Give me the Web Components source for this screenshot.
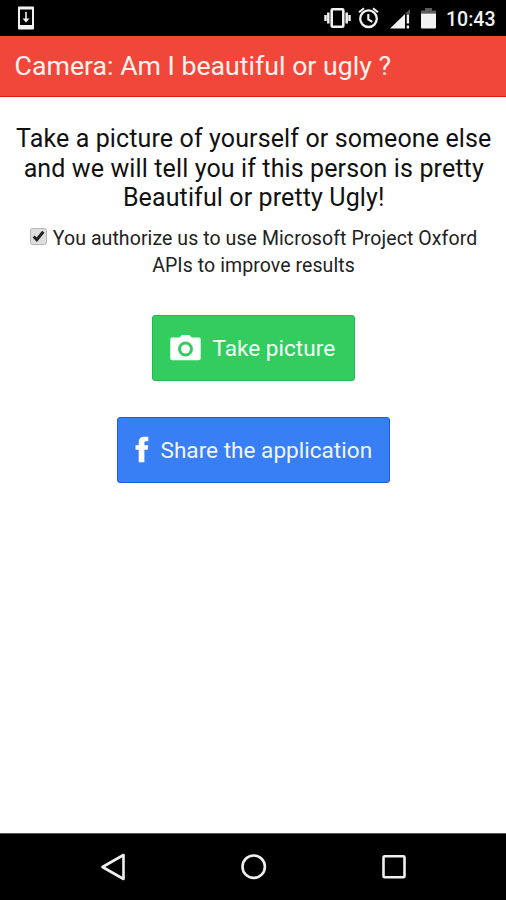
<!DOCTYPE html>
<html lang="en">
<head>
<meta charset="utf-8">
<title>Camera: Am I beautiful or ugly ?</title>
<style>
    html, body {
        margin: 0;
        height: 100%;
        overflow: hidden;
    }
    body {
        font-family: Roboto, "Liberation Sans", sans-serif;
        color: #111;
        background: white;
    }
</style>
</head>
<body>
<camera-app></camera-app>

<script>
class StatusBar extends HTMLElement {

    constructor() {
        super();
        this.shadowDOM = this.attachShadow({mode: "open"});
    }

    connectedCallback() {
        this.render();
    }

    render() {
        this.shadowDOM.innerHTML = `
        <style>
        :host {
            display: flex;
            align-items: center;
            height: 36px;
            box-sizing: border-box;
            padding: 0 11px 0 17px;
            background: black;
            color: #f2f2f2;
        }
        svg {
            display: block;
            flex: none;
        }
        .download {
            margin-right: auto;
        }
        .vibrate { margin-right: 7px; }
        .alarm { margin-right: 11px; }
        .signal { margin-right: 11px; }
        .battery { margin-right: 10px; }
        .time {
            width: 49px;
            font-size: 19.5px;
            font-weight: 500;
            line-height: 36px;
            padding-top: 3px;
            white-space: nowrap;
        }
        </style>

        <svg class="download" width="18" height="36" viewBox="0 0 18 36">
            <path fill="#f2f2f2" fill-rule="evenodd" d="M2 6.5h14a1 1 0 0 1 1 1v21a1 1 0 0 1-1 1H2a1 1 0 0 1-1-1v-21a1 1 0 0 1 1-1zM3 9.5v15.500h12v-15.500z"/>
            <path fill="#f2f2f2" d="M8.200 12h1.600v6.500h2.700L9 22.500l-3.500-4h2.700z"/>
        </svg>
        <svg class="vibrate" width="27" height="36" viewBox="0 0 27 36">
            <rect x="7.700" y="9.200" width="11.600" height="17.600" rx="1" fill="none" stroke="#f2f2f2" stroke-width="2.600"/>
            <path d="M4.300 12.500v11M22.700 12.500v11M1.500 15v6M25.500 15v6" stroke="#f2f2f2" stroke-width="2.500"/>
        </svg>
        <svg class="alarm" width="21" height="36" viewBox="0 0 21 36">
            <circle cx="10.500" cy="18.700" r="8.300" fill="none" stroke="#f2f2f2" stroke-width="2.300"/>
            <path d="M10.300 14v5.300l4 2.500M1 12.300l5-4M20 12.300l-5-4" fill="none" stroke="#f2f2f2" stroke-width="2.100"/>
        </svg>
        <svg class="signal" width="20" height="36" viewBox="0 0 20 36">
            <path d="M0 28.500L15 14v14.500z" fill="#f2f2f2"/>
            <path d="M15 14l5-5v5z" fill="#555"/>
            <path d="M17.900 14.500v9M17.900 25.500v3" stroke="#f2f2f2" stroke-width="2.400"/>
        </svg>
        <svg class="battery" width="15" height="36" viewBox="0 0 15 36">
            <path d="M0 13.500V10.500h4V8h7v2.500h4v3z" fill="#5c5c5c"/>
            <path d="M0 13.500h15v14a1 1 0 0 1-1 1H1a1 1 0 0 1-1-1z" fill="#f2f2f2"/>
        </svg>
        <span class="time"><slot></slot></span>
        `;
    }
}

class HeaderBar extends HTMLElement {

    constructor() {
        super();
        this.shadowDOM = this.attachShadow({mode: "open"});
    }

    connectedCallback() {
        this.render();
    }

    render() {
        this.shadowDOM.innerHTML = `
        <style>
        :host {
            display: block;
            height: 61px;
            box-sizing: border-box;
            padding-left: 14.600px;
            border-bottom: 1px solid #d81b16;
            background: #f1473a;
            color: #fff2ee;
        }
        h1 {
            margin: 0;
            font-size: 26.700px;
            font-weight: 400;
            line-height: 60px;
            white-space: nowrap;
        }
        </style>

        <h1><slot></slot></h1>
        `;
    }
}

class ConsentCheck extends HTMLElement {

    constructor() {
        super();
        this.shadowDOM = this.attachShadow({mode: "open"});
    }

    connectedCallback() {
        this.render();
    }

    render() {
        this.shadowDOM.innerHTML = `
        <style>
        :host {
            display: block;
            font-size: 19.500px;
            line-height: 27px;
            text-align: center;
            letter-spacing: 0.080px;
            color: #222;
        }
        svg {
            width: 17px;
            height: 17px;
            margin-right: 6px;
            vertical-align: 0;
        }
        </style>

        <svg viewBox="0 0 17 17" role="checkbox" aria-checked="true">
            <rect x=".5" y=".5" width="16" height="16" rx="2" fill="#dedede" stroke="#b5b5b5"/>
            <path d="M3.700 8.500l3.100 3.300 6.500-8" fill="none" stroke="#222" stroke-width="3"/>
        </svg><slot></slot>
        `;
    }
}

class ActionButton extends HTMLElement {

    constructor() {
        super();
        this.shadowDOM = this.attachShadow({mode: "open"});
    }

    connectedCallback() {
        this.render();
    }

    render() {
        this.shadowDOM.innerHTML = `
        <style>
        :host {
            display: block;
        }
        button {
            display: flex;
            align-items: center;
            width: 100%;
            height: 66px;
            box-sizing: border-box;
            padding: 1px 0 0 17px;
            border: 1px solid #28b550;
            border-radius: 3px;
            background: #33cd5f;
            color: #f4fff6;
            font: inherit;
            font-size: 22.600px;
            white-space: nowrap;
        }
        :host([kind="positive"]) button {
            border-color: #1a5fe0;
            background: #387ef5;
            color: #f0f6ff;
        }
        ::slotted(svg) {
            display: block;
            flex: none;
        }
        </style>

        <button type="button"><slot name="icon"></slot><slot></slot></button>
        `;
    }
}

class NavBar extends HTMLElement {

    constructor() {
        super();
        this.shadowDOM = this.attachShadow({mode: "open"});
    }

    connectedCallback() {
        this.render();
    }

    render() {
        this.shadowDOM.innerHTML = `
        <style>
        :host {
            display: flex;
            align-items: center;
            justify-content: center;
            gap: 112px;
            height: 67px;
            box-sizing: border-box;
            padding-left: 2px;
            border-top: 1px solid #555;
            background: black;
        }
        svg {
            width: 28px;
            height: 28px;
            fill: none;
            stroke: #f0f0f0;
            stroke-width: 2.6;
            stroke-linejoin: round;
        }
        </style>

        <svg viewBox="0 0 28 28"><path d="M23.500 2v24L2.500 14z"/></svg>
        <svg viewBox="0 0 28 28"><circle cx="13.700" cy="13.700" r="11.200"/></svg>
        <svg viewBox="0 0 28 28"><rect x="3.500" y="3.300" width="21" height="21" rx="1"/></svg>
        `;
    }
}

class CameraApp extends HTMLElement {

    constructor() {
        super();
        this.shadowDOM = this.attachShadow({mode: "open"});
    }

    connectedCallback() {
        this.render();
    }

    render() {
        this.shadowDOM.innerHTML = `
        <style>
        :host {
            display: flex;
            flex-direction: column;
            width: 506px;
            height: 900px;
        }
        main {
            flex: 1;
            display: flex;
            flex-direction: column;
            align-items: center;
            padding-top: 27px;
        }
        h4 {
            margin: 0 0 12px;
            padding-left: 1.500px;
            font-size: 25px;
            font-weight: 400;
            line-height: 29.600px;
            letter-spacing: 0.120px;
            text-align: center;
            white-space: nowrap;
        }
        consent-check {
            padding-left: 1px;
            white-space: nowrap;
        }
        .take {
            width: 203px;
            margin-top: 36px;
        }
        .share {
            width: 273px;
            margin-top: 36px;
        }
        .camera { margin-right: 12px; }
        .facebook { margin-right: 12px; }
        </style>

        <status-bar>10:43</status-bar>
        <header-bar>Camera: Am I beautiful or ugly ?</header-bar>
        <main>
            <h4>Take a picture of yourself or someone else<br>and we will tell you if this person is pretty<br>Beautiful or pretty Ugly!</h4>
            <consent-check>You authorize us to use Microsoft Project Oxford<br>APIs to improve results</consent-check>
            <action-button class="take">
                <svg slot="icon" class="camera" width="31" height="28" viewBox="0 0 31 28">
                    <path fill="white" fill-rule="evenodd" d="M2 3.500h7.500l1.800-2q.5-.6 1.300-.6h6q.8 0 1.300.6L21.700 3.500H29q1.700 0 1.700 1.700V24.500q0 1.700-1.700 1.700H2Q.3 26.200.3 24.500V5.200Q.3 3.500 2 3.500zM15.500 7.500a7.500 7.500 0 1 0 0 15 7.500 7.500 0 0 0 0-15z"/>
                    <circle cx="15.500" cy="15" r="4.500" fill="white"/>
                </svg>Take picture</action-button>
            <action-button class="share" kind="positive">
                <svg slot="icon" class="facebook" width="14" height="28" viewBox="0 0 14 28">
                    <path fill="white" d="M13.300.7v4.600h-2.500c-1 0-1.400.5-1.400 1.500v2.500h3.900l-.5 4.400H9.400v12.600H3.700V13.700H.5V9.300h3.200V6.200c0-3.700 2.200-5.500 6-5.500z"/>
                </svg>Share the application</action-button>
        </main>
        <nav-bar></nav-bar>
        `;
    }
}

customElements.define("status-bar", StatusBar);
customElements.define("header-bar", HeaderBar);
customElements.define("consent-check", ConsentCheck);
customElements.define("action-button", ActionButton);
customElements.define("nav-bar", NavBar);
customElements.define("camera-app", CameraApp);
</script>
</body>
</html>
